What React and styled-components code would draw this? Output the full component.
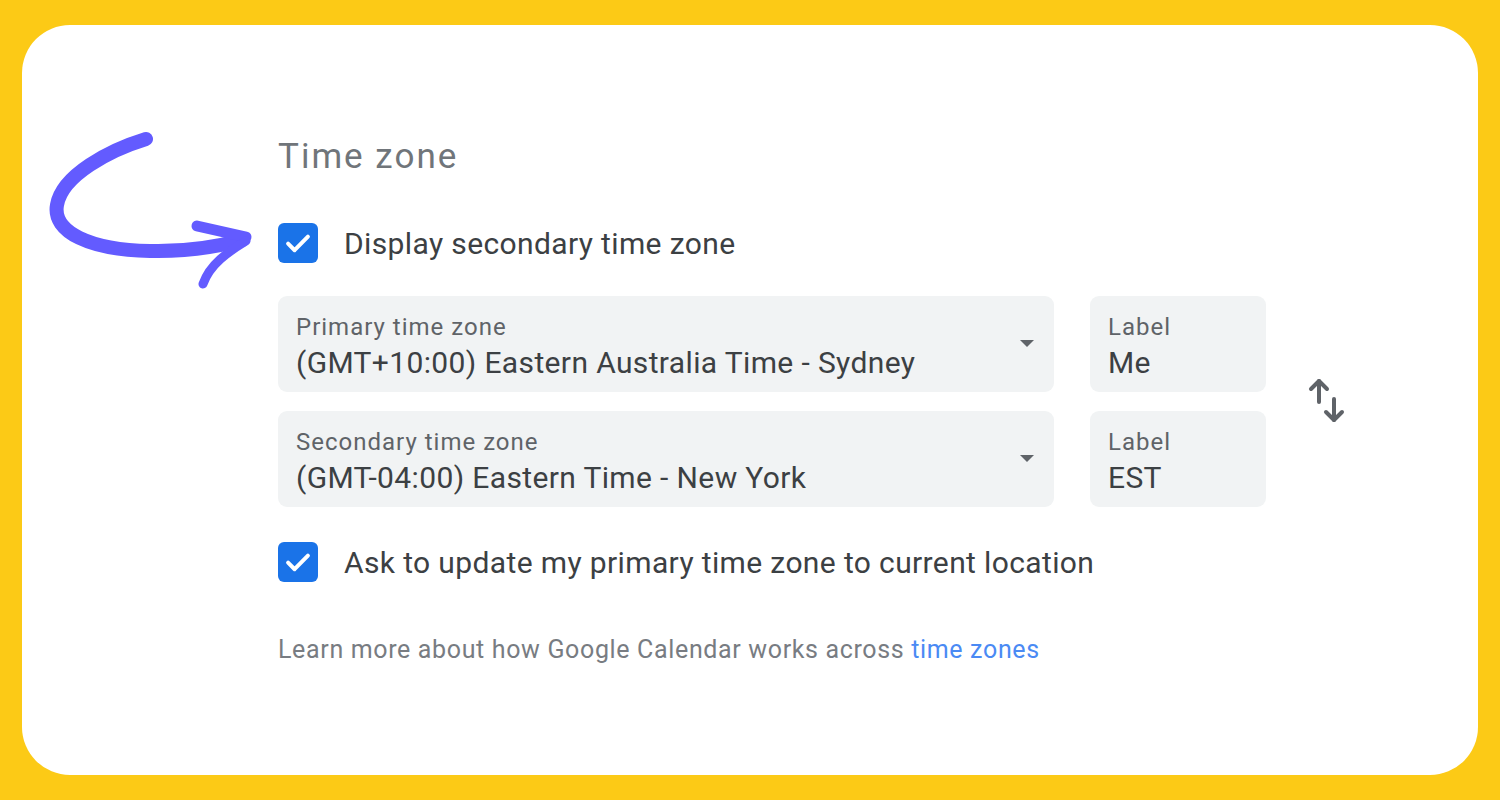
import React from 'react';
import styled, { createGlobalStyle } from 'styled-components';

const Global = createGlobalStyle`
  html, body {
    margin: 0;
    padding: 0;
    background: #fcca16;
  }
  * { box-sizing: border-box; }
`;

const Page = styled.div`
  position: relative;
  width: 1500px;
  height: 800px;
  padding: 25px 22px;
  background: #fcca16;
  font-family: Roboto, "Liberation Sans", Arial, sans-serif;
`;

const Card = styled.div`
  width: 100%;
  height: 100%;
  background: #ffffff;
  border-radius: 48px;
  padding: 112px 0 0 256px;
`;

const Title = styled.h2`
  margin: 0;
  font-size: 35px;
  line-height: 40px;
  font-weight: 400;
  letter-spacing: 2px;
  color: #70757a;
`;

const CheckRow = styled.label`
  display: flex;
  align-items: center;
  gap: 26px;
  height: 40px;
  margin-top: ${(p) => p.$top}px;
  font-size: 30px;
  letter-spacing: 0.37px;
  color: #3c4043;
`;

const Box = styled.span`
  width: 40px;
  height: 40px;
  border-radius: 6px;
  background: #1a73e8;
  display: flex;
  align-items: center;
  justify-content: center;
  flex-shrink: 0;
`;

const Fields = styled.div`
  display: grid;
  grid-template-columns: 776px 176px 80px;
  grid-template-rows: 96px 96px;
  column-gap: 36px;
  row-gap: 19px;
  margin-top: 33px;
`;

const Field = styled.div`
  position: relative;
  background: #f1f3f4;
  border-radius: 9px;
  padding: 18px 18px 0;
`;

const FieldLabel = styled.div`
  font-size: 24px;
  line-height: 26px;
  letter-spacing: 1px;
  color: #5f6368;
`;

const FieldValue = styled.div`
  margin-top: 6px;
  font-size: 30px;
  line-height: 34px;
  letter-spacing: 0.37px;
  color: #3c4043;
  white-space: nowrap;
`;

const Caret = styled.span`
  position: absolute;
  right: 20px;
  top: 44px;
  width: 0;
  height: 0;
  border-left: 7px solid transparent;
  border-right: 7px solid transparent;
  border-top: 7px solid #5f6368;
`;

const SwapCell = styled.div`
  grid-column: 3;
  grid-row: 1 / span 2;
  display: flex;
  align-items: center;
  padding-left: 5px;
`;

const Footer = styled.p`
  margin: 53px 0 0;
  font-size: 25px;
  line-height: 30px;
  letter-spacing: 0.65px;
  color: #787c82;
`;

const Link = styled.a`
  color: #4a8af4;
  text-decoration: none;
`;

const Annotation = styled.svg`
  position: absolute;
  left: 0;
  top: 0;
  pointer-events: none;
`;

function Check() {
  return (
    <Box>
      <svg width="34" height="34" viewBox="0 0 24 24">
        <path d="M5 12.5l4.6 4.6L19 7.5" fill="none" stroke="#fff" strokeWidth="2.8" strokeLinecap="round" strokeLinejoin="round" />
      </svg>
    </Box>
  );
}

function SwapIcon() {
  return (
    <svg width="40" height="48" viewBox="0 0 40 48">
      <g fill="none" stroke="#5f6368" strokeWidth="4" strokeLinecap="round" strokeLinejoin="round">
        <path d="M12 3v21" />
        <path d="M4 11l8-8 8 8" />
        <path d="M27 21v21" />
        <path d="M19 34l8 8 8-8" />
      </g>
    </svg>
  );
}

function Arrow() {
  return (
    <Annotation width="300" height="300" viewBox="0 0 300 300">
      <path
        d="M146 139 C 110 150, 62 175, 57 205 C 52 232, 90 250, 150 251 C 190 252, 220 246, 242 240"
        fill="none"
        stroke="#635bff"
        strokeWidth="14"
        strokeLinecap="round"
      />
      <path d="M197 226 L 246 237" fill="none" stroke="#635bff" strokeWidth="11" strokeLinecap="round" />
      <path d="M246 241 C 228 252, 210 264, 203 284" fill="none" stroke="#635bff" strokeWidth="9" strokeLinecap="round" />
    </Annotation>
  );
}

export default function App() {
  return (
    <>
      <Global />
      <Page>
        <Card>
          <Title>Time zone</Title>
          <CheckRow $top={46}>
            <Check />
            Display secondary time zone
          </CheckRow>
          <Fields>
            <Field>
              <FieldLabel>Primary time zone</FieldLabel>
              <FieldValue>(GMT+10:00) Eastern Australia Time - Sydney</FieldValue>
              <Caret />
            </Field>
            <Field>
              <FieldLabel>Label</FieldLabel>
              <FieldValue>Me</FieldValue>
            </Field>
            <SwapCell>
              <SwapIcon />
            </SwapCell>
            <Field>
              <FieldLabel>Secondary time zone</FieldLabel>
              <FieldValue>(GMT-04:00) Eastern Time - New York</FieldValue>
              <Caret />
            </Field>
            <Field>
              <FieldLabel>Label</FieldLabel>
              <FieldValue>EST</FieldValue>
            </Field>
          </Fields>
          <CheckRow $top={35}>
            <Check />
            Ask to update my primary time zone to current location
          </CheckRow>
          <Footer>
            Learn more about how Google Calendar works across <Link href="#">time zones</Link>
          </Footer>
        </Card>
        <Arrow />
      </Page>
    </>
  );
}
